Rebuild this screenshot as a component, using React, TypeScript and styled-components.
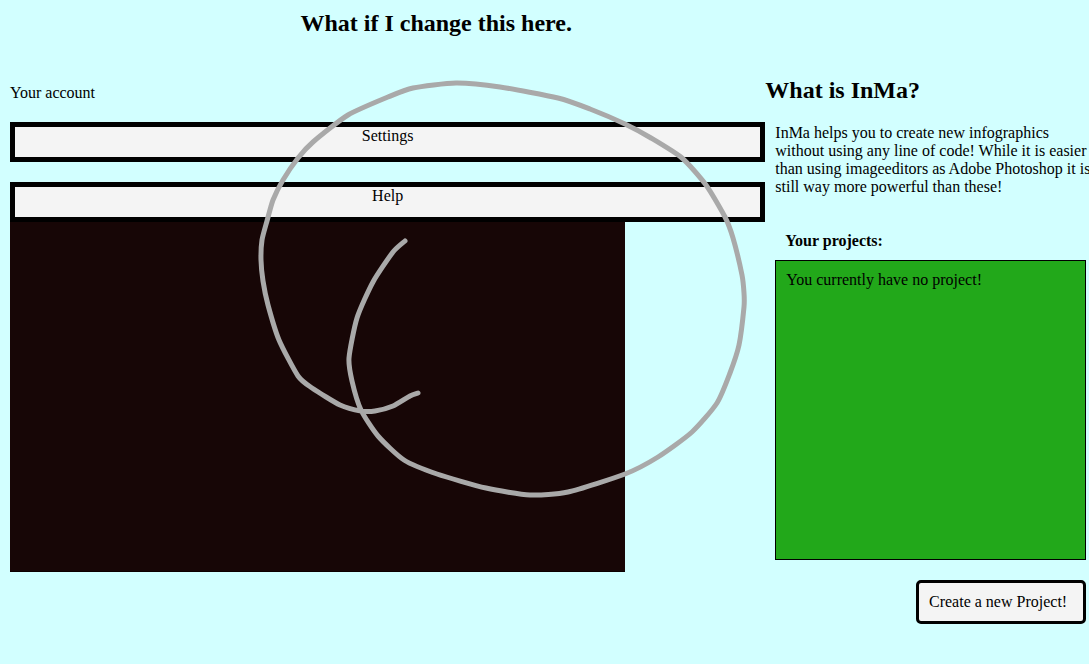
import React from "react";
import styled, { createGlobalStyle } from "styled-components";

const GlobalStyle = createGlobalStyle`
  * { box-sizing: border-box; }
  body {
    margin: 0;
    overflow-x: hidden;
    background: #d2ffff;
    color: #000;
    font: 16px/18px "Liberation Serif", "Times New Roman", serif;
  }
`;

const Page = styled.div`
  position: relative;
  min-height: 100vh;
  padding: 9px 0 40px 10px;
`;

const Header = styled.header`
  width: 79%;
  text-align: center;
`;

const Title = styled.h1`
  margin: 0;
  font-size: 24px;
  line-height: 28px;
`;

const Columns = styled.main`
  display: grid;
  grid-template-columns: minmax(0, 7fr) minmax(0, 3fr);
  align-items: start;
  margin-top: 39px;
`;

const Workspace = styled.section`
  display: flex;
  flex-direction: column;
  padding-top: 8px;
`;

const AccountLabel = styled.p`
  margin: 0 0 20px;
`;

const MenuList = styled.nav`
  display: flex;
  flex-direction: column;
  gap: 20px;
`;

const MenuButton = styled.button`
  display: flex;
  align-items: flex-start;
  justify-content: center;
  height: 40px;
  padding: 0;
  border: 5px solid;
  border-color: #000 #010101;
  background: #f4f4f4;
  color: inherit;
  font: inherit;
`;

const DrawingArea = styled.div`
  width: 615px;
  max-width: 100%;
  height: 350px;
  background: #170606;
  border-bottom: 1px solid #0c0000;
`;

const Sidebar = styled.aside`
  display: flex;
  flex-direction: column;
`;

const SectionTitle = styled.h2`
  margin: 0 0 20px;
  font-size: 24px;
  line-height: 28px;
`;

const Intro = styled.p`
  margin: 0 -8px 36px 10px;
`;

const ProjectsTitle = styled.h3`
  margin: 0 0 10px 20px;
  font-size: 16px;
  line-height: 18px;
`;

const ProjectsBox = styled.div`
  height: 300px;
  margin: 0 3px 20px 10px;
  padding: 10px;
  border: 1px solid #000;
  background: #22a81a;
`;

const CreateButton = styled.button`
  align-self: flex-end;
  width: 170px;
  margin-right: 3px;
  padding: 10px;
  border: 3px solid #000;
  border-radius: 5px;
  background: #f4f4f4;
  color: inherit;
  font: inherit;
  text-align: left;
`;

const StrokeLayer = styled.svg`
  position: absolute;
  top: 0;
  left: 0;
  overflow: visible;
  pointer-events: none;
`;

type Point = [number, number];

const strokePoints: Point[] = [
  [405, 241], [393, 252], [373, 282], [357, 318], [349, 358], [352, 381],
  [361, 410], [378, 436], [404, 460], [437, 474], [486, 488], [530, 495],
  [568, 492], [625, 474], [658, 457], [692, 432], [717, 403], [730, 373],
  [739, 345], [744, 307], [744, 293], [742, 275], [733, 238], [725, 217],
  [706, 185], [682, 158], [651, 138], [625, 124], [590, 109], [558, 98],
  [500, 87], [456, 83], [413, 88], [388, 97], [348, 115], [313, 142],
  [298, 158], [283, 180], [273, 200], [267, 221], [262, 240], [261, 260],
  [263, 281], [268, 305], [279, 340], [298, 376], [312, 388], [340, 405],
  [361, 411], [375, 411], [393, 406], [410, 396], [418, 393],
];

function smoothPath(points: Point[], stiffness = 9): string {
  let d = `M${points[0][0]} ${points[0][1]}`;
  for (let i = 0; i < points.length - 1; i++) {
    const before = points[Math.max(i - 1, 0)];
    const from = points[i];
    const to = points[i + 1];
    const after = points[Math.min(i + 2, points.length - 1)];
    const c1 = [
      from[0] + (to[0] - before[0]) / stiffness,
      from[1] + (to[1] - before[1]) / stiffness,
    ];
    const c2 = [
      to[0] - (after[0] - from[0]) / stiffness,
      to[1] - (after[1] - from[1]) / stiffness,
    ];
    d += `C${c1[0]} ${c1[1]} ${c2[0]} ${c2[1]} ${to[0]} ${to[1]}`;
  }
  return d;
}

export default function App() {
  return (
    <>
      <GlobalStyle />
      <Page>
        <Header>
          <Title>What if I change this here.</Title>
        </Header>
        <Columns>
          <Workspace>
            <AccountLabel>Your account</AccountLabel>
            <MenuList>
              <MenuButton type="button">Settings</MenuButton>
              <MenuButton type="button">Help</MenuButton>
            </MenuList>
            <DrawingArea />
          </Workspace>
          <Sidebar>
            <SectionTitle>What is InMa?</SectionTitle>
            <Intro>
              InMa helps you to create new infographics without using any line
              of code! While it is easier than using imageeditors as Adobe
              Photoshop it is still way more powerful than these!
            </Intro>
            <ProjectsTitle>Your projects:</ProjectsTitle>
            <ProjectsBox>You currently have no project!</ProjectsBox>
            <CreateButton type="button">Create a new Project!</CreateButton>
          </Sidebar>
        </Columns>
        <StrokeLayer width="1" height="1" aria-hidden="true">
          <path
            d={smoothPath(strokePoints)}
            fill="none"
            stroke="#a9a9a9"
            strokeWidth="5"
            strokeLinecap="round"
            strokeLinejoin="round"
          />
        </StrokeLayer>
      </Page>
    </>
  );
}
